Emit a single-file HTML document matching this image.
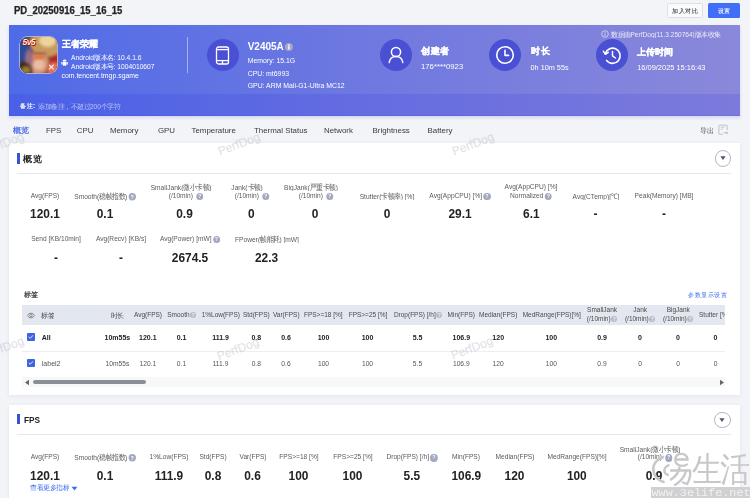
<!DOCTYPE html>
<html><head><meta charset="utf-8"><style>
html,body{margin:0;padding:0;}
body{width:750px;height:498px;position:relative;overflow:hidden;background:#f2f4f8;font-family:"Liberation Sans",sans-serif;}
.t{position:absolute;line-height:1;white-space:nowrap;}
.q2{display:inline-block;width:1.28em;height:1.28em;border-radius:50%;background:#b6bac8;color:#eef0f5;font-size:0.77em;line-height:1.32;text-align:center;font-weight:bold;vertical-align:0;margin-left:0.06em}
#w{position:absolute;left:0;top:0;width:750px;height:498px;will-change:transform;}
.q{display:inline-block;width:1.5em;height:1.32em;border-radius:50%;background:#a3a8c0;color:#fff;font-size:0.727em;line-height:1.357;text-align:center;font-weight:bold;vertical-align:0;margin-left:0.27em}
</style></head><body><div id="w">
<div class="t" style="top:5.63px;font-size:10.000px;font-weight:bold;color:#222;left:13.6px;transform:scale(0.9500,1.0000);transform-origin:0 0;-webkit-text-stroke:0.25px #222">PD_20250916_15_16_15</div>
<div style="position:absolute;left:667px;top:3px;width:36px;height:14.5px;background:#f9fafc;border:0.8px solid #dde0e8;box-sizing:border-box;border-radius:1.5px"></div>
<div class="t" style="top:7.58px;font-size:12.800px;color:#333;left:385.0px;width:600px;text-align:center;transform:scale(0.5000,0.5000);transform-origin:50% 0;-webkit-text-stroke:0.12px #333">加入对比</div>
<div style="position:absolute;left:707.5px;top:3px;width:32.5px;height:14.5px;background:#406ef9;border-radius:1.5px"></div>
<div class="t" style="top:7.58px;font-size:12.800px;color:#fff;left:423.70000000000005px;width:600px;text-align:center;transform:scale(0.5000,0.5000);transform-origin:50% 0;-webkit-text-stroke:0.12px #fff">设置</div>
<div style="position:absolute;left:9px;top:25px;width:731px;height:91px;background:linear-gradient(90deg,#4f6be8 0%,#6e78e0 48%,#8a88da 100%);box-shadow:0 2px 3px rgba(110,110,230,0.22)"></div>
<div style="position:absolute;left:9px;top:93.7px;width:731px;height:22.3px;background:rgba(30,25,230,0.12);border-bottom:0.8px solid rgba(50,50,200,0.12);box-sizing:border-box"></div>
<div style="position:absolute;left:20px;top:37px;width:36.5px;height:36px;border-radius:7.5px;overflow:hidden;box-shadow:0 0 0 0.7px rgba(255,235,190,0.75);background:#7a4a34"><div style="position:absolute;left:-5px;top:-2px;width:16px;height:28px;background:#2c4c9a;border-radius:50%;filter:blur(1.8px);"></div><div style="position:absolute;left:30px;top:10px;width:12px;height:22px;background:#b82420;border-radius:50%;filter:blur(1.4px);"></div><div style="position:absolute;left:10px;top:-8px;width:34px;height:28px;background:#c89a5c;border-radius:50%;filter:blur(1.8px);"></div><div style="position:absolute;left:19px;top:-3px;width:17px;height:13px;background:#eed49c;border-radius:50%;filter:blur(1.5px);"></div><div style="position:absolute;left:7px;top:14px;width:22px;height:24px;background:#d49478;border-radius:50%;filter:blur(1.4px);"></div><div style="position:absolute;left:13px;top:22px;width:12px;height:11px;background:#eabca4;border-radius:50%;filter:blur(1.4px);"></div><div style="position:absolute;left:5px;top:12px;width:8px;height:18px;background:#9a6a88;border-radius:50%;filter:blur(1.4px);"></div><div style="position:absolute;left:12px;top:15px;width:15px;height:3px;background:rgba(120,70,50,0.6);border-radius:50%;filter:blur(1.1px);"></div><div style="position:absolute;left:13px;top:18px;width:12px;height:3.5px;background:#e07838;border-radius:50%;filter:blur(0.8px);"></div><div style="position:absolute;left:-6px;top:25px;width:18px;height:18px;background:#3a2a18;border-radius:50%;filter:blur(1.8px);"></div><div style="position:absolute;left:1px;top:29px;width:10px;height:8px;background:#9a7a38;border-radius:50%;filter:blur(1.4px);"></div><div style="position:absolute;left:27px;top:25px;width:14px;height:15px;background:#ea7052;border-radius:50%;filter:blur(1.4px);"></div><div style="position:absolute;left:27.5px;top:26.5px;font:bold 8px/1 'Liberation Sans';color:#fff;opacity:0.9">✕</div><div style="position:absolute;left:2.5px;top:0.5px;font:italic bold 8.6px/1 'Liberation Sans';letter-spacing:-0.6px;color:#ffe8d0;text-shadow:0 0 0.6px #c81808,0 0 0.6px #c81808,0.6px 0.6px 0.8px #a01006">5v5</div></div>
<div class="t" style="top:39.30px;font-size:18.200px;font-weight:bold;color:#fff;left:61.6px;transform:scale(0.5000,0.5000);transform-origin:0 0;-webkit-text-stroke:0.5px #fff">王者荣耀</div>
<svg style="position:absolute;left:61px;top:58.6px" width="7.2" height="7.6" viewBox="0 0 7.2 7.6"><path d="M1.6 2.6 A2 2 0 0 1 5.6 2.6 Z" fill="#fff"/><rect x="1.6" y="2.9" width="4" height="3.4" rx="0.5" fill="#fff"/><rect x="0.3" y="3" width="1" height="2.6" rx="0.5" fill="#fff"/><rect x="5.9" y="3" width="1" height="2.6" rx="0.5" fill="#fff"/><rect x="2.4" y="5.6" width="0.9" height="1.7" rx="0.4" fill="#fff"/><rect x="3.9" y="5.6" width="0.9" height="1.7" rx="0.4" fill="#fff"/></svg>
<div class="t" style="top:54.43px;font-size:13.400px;color:#fff;left:70.9px;transform:scale(0.5000,0.5000);transform-origin:0 0;">Android版本名: 10.4.1.6</div>
<div class="t" style="top:62.63px;font-size:13.400px;color:#fff;left:70.9px;transform:scale(0.5000,0.5000);transform-origin:0 0;">Android版本号: 1004010607</div>
<div class="t" style="top:73.06px;font-size:6.900px;color:#fff;left:61.5px;">com.tencent.tmgp.sgame</div>
<div style="position:absolute;left:187px;top:37px;width:1px;height:36px;background:rgba(255,255,255,0.45)"></div>
<div style="position:absolute;left:206.5px;top:39px;width:32px;height:32px;background:#4a50d4;border-radius:50%"></div>
<svg style="position:absolute;left:215px;top:46px" width="15" height="19" viewBox="0 0 15 19"><rect x="1.5" y="1" width="12" height="17" rx="2" fill="none" stroke="#fff" stroke-width="1.3"/><line x1="1.5" y1="3.6" x2="13.5" y2="3.6" stroke="#fff" stroke-width="1.3"/><line x1="1.5" y1="14.6" x2="13.5" y2="14.6" stroke="#fff" stroke-width="1.3"/><line x1="7.5" y1="14.6" x2="7.5" y2="18" stroke="#fff" stroke-width="1.3"/></svg>
<div class="t" style="top:41.53px;font-size:10.000px;font-weight:bold;color:#fff;left:247.7px;">V2405A</div>
<svg style="position:absolute;left:285.2px;top:43px" width="7.8" height="7.8" viewBox="0 0 8 8"><circle cx="4" cy="4" r="4" fill="#a6aac6"/><circle cx="4" cy="2.2" r="0.8" fill="#fff"/><rect x="3.3" y="3.4" width="1.4" height="3.2" rx="0.3" fill="#fff"/></svg>
<div class="t" style="top:58.46px;font-size:6.900px;color:#fff;left:247.7px;">Memory: 15.1G</div>
<div class="t" style="top:70.66px;font-size:6.900px;color:#fff;left:247.7px;">CPU: mt6993</div>
<div class="t" style="top:82.76px;font-size:6.900px;color:#fff;left:247.7px;">GPU: ARM Mali-G1-Ultra MC12</div>
<div style="position:absolute;left:380px;top:39px;width:32px;height:32px;background:#4a50d4;border-radius:50%"></div>
<svg style="position:absolute;left:380px;top:39px" width="32" height="32" viewBox="0 0 32 32"><circle cx="16" cy="13" r="4.6" fill="none" stroke="#fff" stroke-width="1.5"/><path d="M9.2 23.5 C9.8 19.3 12.5 17.6 16 17.6 C19.5 17.6 22.2 19.3 22.8 23.5" fill="none" stroke="#fff" stroke-width="1.5" stroke-linecap="round"/></svg>
<div class="t" style="top:46.14px;font-size:18.800px;font-weight:bold;color:#fff;left:421px;transform:scale(0.5000,0.5000);transform-origin:0 0;-webkit-text-stroke:0.5px #fff">创建者</div>
<div class="t" style="top:63.34px;font-size:7.750px;color:#fff;left:421px;">176****0923</div>
<div style="position:absolute;left:489.2px;top:39px;width:32px;height:32px;background:#4a50d4;border-radius:50%"></div>
<svg style="position:absolute;left:489.2px;top:39px" width="32" height="32" viewBox="0 0 32 32"><circle cx="16" cy="16" r="8.3" fill="none" stroke="#fff" stroke-width="1.6"/><path d="M16 11.2 V16.4 H19.6" fill="none" stroke="#fff" stroke-width="1.6" stroke-linecap="round" stroke-linejoin="round"/></svg>
<div class="t" style="top:46.14px;font-size:18.800px;font-weight:bold;color:#fff;left:530.5px;transform:scale(0.5000,0.5000);transform-origin:0 0;-webkit-text-stroke:0.5px #fff">时长</div>
<div class="t" style="top:63.72px;font-size:7.300px;color:#fff;left:530.5px;">0h 10m 55s</div>
<div style="position:absolute;left:595.7px;top:39px;width:32px;height:32px;background:#4a50d4;border-radius:50%"></div>
<svg style="position:absolute;left:595.7px;top:39px" width="32" height="32" viewBox="0 0 32 32"><path d="M9.3 14.5 A7.6 7.6 0 1 1 10.6 21.5" fill="none" stroke="#fff" stroke-width="1.6" stroke-linecap="round"/><path d="M7.3 12.2 L9.4 15.3 L12.3 13.4" fill="none" stroke="#fff" stroke-width="1.5" stroke-linecap="round" stroke-linejoin="round"/><path d="M16.5 12.5 V16.8 L19.4 19" fill="none" stroke="#fff" stroke-width="1.5" stroke-linecap="round" stroke-linejoin="round"/></svg>
<div class="t" style="top:46.70px;font-size:18.200px;font-weight:bold;color:#fff;left:637.2px;transform:scale(0.5000,0.5000);transform-origin:0 0;-webkit-text-stroke:0.5px #fff">上传时间</div>
<div class="t" style="top:63.79px;font-size:7.450px;color:#fff;left:637.2px;">16/09/2025 15:16:43</div>
<svg style="position:absolute;left:601px;top:30px" width="8" height="8" viewBox="0 0 8 8"><circle cx="4" cy="4" r="3.3" fill="none" stroke="#e8e6f8" stroke-width="0.7"/><line x1="4" y1="3.4" x2="4" y2="6" stroke="#e8e6f8" stroke-width="0.8"/><circle cx="4" cy="2.2" r="0.45" fill="#e8e6f8"/></svg>
<div class="t" style="top:30.66px;font-size:13.100px;color:#eceaf8;left:611px;transform:scale(0.5000,0.5000);transform-origin:0 0;">数据由PerfDog(11.3.250764)版本收集</div>
<div class="t" style="top:103.18px;font-size:12.800px;font-weight:bold;color:#fff;left:19.6px;transform:scale(0.5000,0.5000);transform-origin:0 0;">备注:</div>
<div class="t" style="top:103.10px;font-size:13.000px;color:rgba(255,255,255,0.6);left:37.5px;transform:scale(0.5000,0.5000);transform-origin:0 0;">添加备注，不超过200个字符</div>
<div class="t" style="top:126.07px;font-size:15.200px;color:#3a5ce6;left:13.3px;transform:scale(0.5000,0.5000);transform-origin:0 0;-webkit-text-stroke:0.4px #3a5ce6">概览</div>
<div class="t" style="top:126.61px;font-size:7.900px;color:#3a3a3a;left:45.9px;">FPS</div>
<div class="t" style="top:126.61px;font-size:7.900px;color:#3a3a3a;left:76.8px;">CPU</div>
<div class="t" style="top:126.61px;font-size:7.900px;color:#3a3a3a;left:109.9px;">Memory</div>
<div class="t" style="top:126.61px;font-size:7.900px;color:#3a3a3a;left:157.9px;">GPU</div>
<div class="t" style="top:126.61px;font-size:7.900px;color:#3a3a3a;left:191.5px;">Temperature</div>
<div class="t" style="top:126.61px;font-size:7.900px;color:#3a3a3a;left:254px;">Thermal Status</div>
<div class="t" style="top:126.61px;font-size:7.900px;color:#3a3a3a;left:324px;">Network</div>
<div class="t" style="top:126.61px;font-size:7.900px;color:#3a3a3a;left:372.5px;">Brightness</div>
<div class="t" style="top:126.61px;font-size:7.900px;color:#3a3a3a;left:427.5px;">Battery</div>
<div class="t" style="top:127.33px;font-size:13.400px;color:#555;left:700.2px;transform:scale(0.5000,0.5000);transform-origin:0 0;">导出</div>
<svg style="position:absolute;left:718px;top:123.8px" width="11" height="11" viewBox="0 0 11 11"><path d="M9.3 6 V2.2 Q9.3 1.2 8.3 1.2 H1.9 Q0.9 1.2 0.9 2.2 V9.3 Q0.9 10.3 1.9 10.3 H4.8" fill="none" stroke="#b0b4c0" stroke-width="0.8"/><path d="M2.8 3.3 H6.6 M2.8 5.2 H5" stroke="#b8bcc8" stroke-width="0.7"/><path d="M5.8 8.8 H9.6 M8.4 7.6 L9.6 8.8 L8.4 10" fill="none" stroke="#a8acb8" stroke-width="0.8"/></svg>
<div style="position:absolute;left:9px;top:143px;width:731px;height:252.2px;background:#fff;box-shadow:0 1px 4px rgba(90,90,200,0.1)"></div>
<div style="position:absolute;left:17.4px;top:152.9px;width:2.2px;height:11px;background:#3853d0"></div>
<div class="t" style="top:153.84px;font-size:18.800px;font-weight:bold;color:#222;left:23.4px;transform:scale(0.5000,0.5000);transform-origin:0 0;">概览</div>
<div style="position:absolute;left:17px;top:172.5px;width:714px;height:0.6px;background:#e7e8ee"></div>
<div style="position:absolute;left:714.5px;top:150.2px;width:16.5px;height:16.5px;border:0.75px solid #b4b6c4;border-radius:50%;box-sizing:border-box"></div>
<svg style="position:absolute;left:718.75px;top:154.45px" width="8" height="8" viewBox="0 0 8 8"><path d="M1.4 2.3 H6.6 L4 6.1 Z" fill="#50526a"/></svg>
<div class="t" style="top:191.98px;font-size:7.700px;color:#5a5a5a;left:-105.0px;width:300px;text-align:center;transform:scale(0.8600,1.0000);transform-origin:50% 0;">Avg(FPS)</div>
<div class="t" style="top:209.43px;font-size:11.900px;font-weight:bold;color:#222;left:-105.0px;width:300px;text-align:center;">120.1</div>
<div class="t" style="top:191.98px;font-size:15.400px;color:#5a5a5a;left:-195.0px;width:600px;text-align:center;transform:scale(0.4300,0.5000);transform-origin:50% 0;">Smooth(稳帧指数)<span class="q">?</span></div>
<div class="t" style="top:209.43px;font-size:11.900px;font-weight:bold;color:#222;left:-45.0px;width:300px;text-align:center;">0.1</div>
<div class="t" style="top:183.38px;font-size:15.400px;color:#5a5a5a;left:-119.5px;width:600px;text-align:center;transform:scale(0.4300,0.5000);transform-origin:50% 0;">SmallJank(微小卡顿)</div>
<div class="t" style="top:191.98px;font-size:7.700px;color:#5a5a5a;left:35.5px;width:300px;text-align:center;transform:scale(0.8600,1.0000);transform-origin:50% 0;">(/10min) <span class="q">?</span></div>
<div class="t" style="top:209.43px;font-size:11.900px;font-weight:bold;color:#222;left:34.5px;width:300px;text-align:center;">0.9</div>
<div class="t" style="top:183.38px;font-size:15.400px;color:#5a5a5a;left:-52.599999999999994px;width:600px;text-align:center;transform:scale(0.4300,0.5000);transform-origin:50% 0;">Jank(卡顿)</div>
<div class="t" style="top:191.98px;font-size:7.700px;color:#5a5a5a;left:102.4px;width:300px;text-align:center;transform:scale(0.8600,1.0000);transform-origin:50% 0;">(/10min) <span class="q">?</span></div>
<div class="t" style="top:209.43px;font-size:11.900px;font-weight:bold;color:#222;left:101.4px;width:300px;text-align:center;">0</div>
<div class="t" style="top:183.38px;font-size:15.400px;color:#5a5a5a;left:11.0px;width:600px;text-align:center;transform:scale(0.4300,0.5000);transform-origin:50% 0;">BigJank(严重卡顿)</div>
<div class="t" style="top:191.98px;font-size:7.700px;color:#5a5a5a;left:166.0px;width:300px;text-align:center;transform:scale(0.8600,1.0000);transform-origin:50% 0;">(/10min) <span class="q">?</span></div>
<div class="t" style="top:209.43px;font-size:11.900px;font-weight:bold;color:#222;left:165.0px;width:300px;text-align:center;">0</div>
<div class="t" style="top:191.98px;font-size:15.400px;color:#5a5a5a;left:87.0px;width:600px;text-align:center;transform:scale(0.4300,0.5000);transform-origin:50% 0;">Stutter(卡顿率) [%]</div>
<div class="t" style="top:209.43px;font-size:11.900px;font-weight:bold;color:#222;left:237.0px;width:300px;text-align:center;">0</div>
<div class="t" style="top:191.98px;font-size:7.700px;color:#5a5a5a;left:310.0px;width:300px;text-align:center;transform:scale(0.8600,1.0000);transform-origin:50% 0;">Avg(AppCPU) [%]<span class="q">?</span></div>
<div class="t" style="top:209.43px;font-size:11.900px;font-weight:bold;color:#222;left:310.0px;width:300px;text-align:center;">29.1</div>
<div class="t" style="top:183.38px;font-size:7.700px;color:#5a5a5a;left:381.29999999999995px;width:300px;text-align:center;transform:scale(0.8600,1.0000);transform-origin:50% 0;">Avg(AppCPU) [%]</div>
<div class="t" style="top:191.98px;font-size:7.700px;color:#5a5a5a;left:381.29999999999995px;width:300px;text-align:center;transform:scale(0.8600,1.0000);transform-origin:50% 0;">Normalized<span class="q">?</span></div>
<div class="t" style="top:209.43px;font-size:11.900px;font-weight:bold;color:#222;left:381.29999999999995px;width:300px;text-align:center;">6.1</div>
<div class="t" style="top:191.98px;font-size:15.400px;color:#5a5a5a;left:295.5px;width:600px;text-align:center;transform:scale(0.4300,0.5000);transform-origin:50% 0;">Avg(CTemp)[℃]</div>
<div class="t" style="top:209.43px;font-size:11.900px;font-weight:bold;color:#222;left:445.5px;width:300px;text-align:center;">-</div>
<div class="t" style="top:191.98px;font-size:7.700px;color:#5a5a5a;left:514.0px;width:300px;text-align:center;transform:scale(0.8600,1.0000);transform-origin:50% 0;">Peak(Memory) [MB]</div>
<div class="t" style="top:209.43px;font-size:11.900px;font-weight:bold;color:#222;left:514.0px;width:300px;text-align:center;">-</div>
<div class="t" style="top:234.68px;font-size:7.700px;color:#5a5a5a;left:-94.0px;width:300px;text-align:center;transform:scale(0.8600,1.0000);transform-origin:50% 0;">Send [KB/10min]</div>
<div class="t" style="top:252.73px;font-size:11.900px;font-weight:bold;color:#222;left:-94.0px;width:300px;text-align:center;">-</div>
<div class="t" style="top:234.68px;font-size:7.700px;color:#5a5a5a;left:-29.0px;width:300px;text-align:center;transform:scale(0.8600,1.0000);transform-origin:50% 0;">Avg(Recv) [KB/s]</div>
<div class="t" style="top:252.73px;font-size:11.900px;font-weight:bold;color:#222;left:-29.0px;width:300px;text-align:center;">-</div>
<div class="t" style="top:234.68px;font-size:7.700px;color:#5a5a5a;left:40.0px;width:300px;text-align:center;transform:scale(0.8600,1.0000);transform-origin:50% 0;">Avg(Power) [mW]<span class="q">?</span></div>
<div class="t" style="top:252.73px;font-size:11.900px;font-weight:bold;color:#222;left:40.0px;width:300px;text-align:center;">2674.5</div>
<div class="t" style="top:234.68px;font-size:15.400px;color:#5a5a5a;left:-33.5px;width:600px;text-align:center;transform:scale(0.4300,0.5000);transform-origin:50% 0;">FPower(帧能耗) [mW]</div>
<div class="t" style="top:252.73px;font-size:11.900px;font-weight:bold;color:#222;left:116.5px;width:300px;text-align:center;">22.3</div>
<div class="t" style="top:291.27px;font-size:14.000px;color:#333;left:23.6px;transform:scale(0.5000,0.5000);transform-origin:0 0;-webkit-text-stroke:0.35px #333">标签</div>
<div class="t" style="top:292.08px;font-size:12.800px;color:#3b6cf0;left:126.5px;width:600px;text-align:right;transform:scale(0.5000,0.5000);transform-origin:100% 0;">参数显示设置</div>
<div style="position:absolute;left:22.3px;top:305.3px;width:703px;height:19.8px;background:#e3e7ef"></div>
<svg style="position:absolute;left:26.8px;top:312.2px" width="8" height="7" viewBox="0 0 8 7"><path d="M0.5 3.5 C1.7 0.4 6.3 0.4 7.5 3.5 C6.3 6.6 1.7 6.6 0.5 3.5 Z" fill="none" stroke="#707070" stroke-width="0.75"/><circle cx="4" cy="3.5" r="1.3" fill="none" stroke="#707070" stroke-width="0.75"/></svg>
<div class="t" style="top:312.00px;font-size:13.000px;color:#4a4a4a;left:41px;transform:scale(0.5000,0.5000);transform-origin:0 0;">标签</div>
<div class="t" style="top:312.00px;font-size:13.000px;color:#4a4a4a;left:-182.6px;width:600px;text-align:center;transform:scale(0.5000,0.5000);transform-origin:50% 0;">时长</div>
<div class="t" style="top:312.00px;font-size:6.500px;color:#4a4a4a;left:-2.0px;width:300px;text-align:center;">Avg(FPS)</div>
<div class="t" style="top:312.00px;font-size:6.500px;color:#4a4a4a;left:31.80000000000001px;width:300px;text-align:center;">Smooth<span class="q2">?</span></div>
<div class="t" style="top:312.00px;font-size:6.500px;color:#4a4a4a;left:70.80000000000001px;width:300px;text-align:center;">1%Low(FPS)</div>
<div class="t" style="top:312.00px;font-size:6.500px;color:#4a4a4a;left:106.30000000000001px;width:300px;text-align:center;">Std(FPS)</div>
<div class="t" style="top:312.00px;font-size:6.500px;color:#4a4a4a;left:136.3px;width:300px;text-align:center;">Var(FPS)</div>
<div class="t" style="top:312.00px;font-size:6.500px;color:#4a4a4a;left:173.3px;width:300px;text-align:center;">FPS>=18 [%]</div>
<div class="t" style="top:312.00px;font-size:6.500px;color:#4a4a4a;left:218.0px;width:300px;text-align:center;">FPS>=25 [%]</div>
<div class="t" style="top:312.00px;font-size:6.500px;color:#4a4a4a;left:268.2px;width:300px;text-align:center;">Drop(FPS) [/h]<span class="q2">?</span></div>
<div class="t" style="top:312.00px;font-size:6.500px;color:#4a4a4a;left:311.3px;width:300px;text-align:center;">Min(FPS)</div>
<div class="t" style="top:312.00px;font-size:6.500px;color:#4a4a4a;left:348.2px;width:300px;text-align:center;">Median(FPS)</div>
<div class="t" style="top:312.00px;font-size:6.500px;color:#4a4a4a;left:401.79999999999995px;width:300px;text-align:center;">MedRange(FPS)[%]</div>
<div class="t" style="top:307.30px;font-size:6.500px;color:#4a4a4a;left:452.1px;width:300px;text-align:center;">SmallJank</div>
<div class="t" style="top:315.50px;font-size:6.500px;color:#4a4a4a;left:452.1px;width:300px;text-align:center;">(/10min)<span class="q2">?</span></div>
<div class="t" style="top:307.30px;font-size:6.500px;color:#4a4a4a;left:490.20000000000005px;width:300px;text-align:center;">Jank</div>
<div class="t" style="top:315.50px;font-size:6.500px;color:#4a4a4a;left:490.20000000000005px;width:300px;text-align:center;">(/10min)<span class="q2">?</span></div>
<div class="t" style="top:307.30px;font-size:6.500px;color:#4a4a4a;left:528.2px;width:300px;text-align:center;">BigJank</div>
<div class="t" style="top:315.50px;font-size:6.500px;color:#4a4a4a;left:528.2px;width:300px;text-align:center;">(/10min)<span class="q2">?</span></div>
<div class="t" style="top:312.00px;font-size:6.500px;color:#4a4a4a;left:699px;width:26px;overflow:hidden;white-space:nowrap">Stutter [%]</div>
<div style="position:absolute;left:27.1px;top:333.2px;width:7.6px;height:7.6px;background:#3d63e0;border-radius:1px"></div>
<svg style="position:absolute;left:27.1px;top:333.2px" width="7.6" height="7.6" viewBox="0 0 8 8"><path d="M1.8 4.1 L3.4 5.6 L6.3 2.5" fill="none" stroke="#fff" stroke-width="0.9"/></svg>
<div class="t" style="top:334.07px;font-size:7.000px;font-weight:bold;color:#222;left:41.8px;">All</div>
<div class="t" style="top:334.07px;font-size:7.000px;font-weight:bold;color:#222;left:-32.599999999999994px;width:300px;text-align:center;">10m55s</div>
<div class="t" style="top:334.07px;font-size:7.000px;font-weight:bold;color:#222;left:-2.1999999999999886px;width:300px;text-align:center;">120.1</div>
<div class="t" style="top:334.07px;font-size:7.000px;font-weight:bold;color:#222;left:31.5px;width:300px;text-align:center;">0.1</div>
<div class="t" style="top:334.07px;font-size:7.000px;font-weight:bold;color:#222;left:70.5px;width:300px;text-align:center;">111.9</div>
<div class="t" style="top:334.07px;font-size:7.000px;font-weight:bold;color:#222;left:106.30000000000001px;width:300px;text-align:center;">0.8</div>
<div class="t" style="top:334.07px;font-size:7.000px;font-weight:bold;color:#222;left:136.0px;width:300px;text-align:center;">0.6</div>
<div class="t" style="top:334.07px;font-size:7.000px;font-weight:bold;color:#222;left:173.5px;width:300px;text-align:center;">100</div>
<div class="t" style="top:334.07px;font-size:7.000px;font-weight:bold;color:#222;left:217.5px;width:300px;text-align:center;">100</div>
<div class="t" style="top:334.07px;font-size:7.000px;font-weight:bold;color:#222;left:267.5px;width:300px;text-align:center;">5.5</div>
<div class="t" style="top:334.07px;font-size:7.000px;font-weight:bold;color:#222;left:311.3px;width:300px;text-align:center;">106.9</div>
<div class="t" style="top:334.07px;font-size:7.000px;font-weight:bold;color:#222;left:348.2px;width:300px;text-align:center;">120</div>
<div class="t" style="top:334.07px;font-size:7.000px;font-weight:bold;color:#222;left:401.29999999999995px;width:300px;text-align:center;">100</div>
<div class="t" style="top:334.07px;font-size:7.000px;font-weight:bold;color:#222;left:452.0px;width:300px;text-align:center;">0.9</div>
<div class="t" style="top:334.07px;font-size:7.000px;font-weight:bold;color:#222;left:490.0px;width:300px;text-align:center;">0</div>
<div class="t" style="top:334.07px;font-size:7.000px;font-weight:bold;color:#222;left:528.0px;width:300px;text-align:center;">0</div>
<div class="t" style="top:334.07px;font-size:7.000px;font-weight:bold;color:#222;left:565.5px;width:300px;text-align:center;">0</div>
<div style="position:absolute;left:22.3px;top:351px;width:703px;height:0.6px;background:#eceef3"></div>
<div style="position:absolute;left:27.1px;top:359.3px;width:7.6px;height:7.6px;background:#3d63e0;border-radius:1px"></div>
<svg style="position:absolute;left:27.1px;top:359.3px" width="7.6" height="7.6" viewBox="0 0 8 8"><path d="M1.8 4.1 L3.4 5.6 L6.3 2.5" fill="none" stroke="#fff" stroke-width="0.9"/></svg>
<div class="t" style="top:360.07px;font-size:7.000px;color:#555;left:41.8px;">label2</div>
<div class="t" style="top:360.93px;font-size:6.700px;color:#555;left:-32.599999999999994px;width:300px;text-align:center;">10m55s</div>
<div class="t" style="top:360.93px;font-size:6.700px;color:#555;left:-2.1999999999999886px;width:300px;text-align:center;">120.1</div>
<div class="t" style="top:360.93px;font-size:6.700px;color:#555;left:31.5px;width:300px;text-align:center;">0.1</div>
<div class="t" style="top:360.93px;font-size:6.700px;color:#555;left:70.5px;width:300px;text-align:center;">111.9</div>
<div class="t" style="top:360.93px;font-size:6.700px;color:#555;left:106.30000000000001px;width:300px;text-align:center;">0.8</div>
<div class="t" style="top:360.93px;font-size:6.700px;color:#555;left:136.0px;width:300px;text-align:center;">0.6</div>
<div class="t" style="top:360.93px;font-size:6.700px;color:#555;left:173.5px;width:300px;text-align:center;">100</div>
<div class="t" style="top:360.93px;font-size:6.700px;color:#555;left:217.5px;width:300px;text-align:center;">100</div>
<div class="t" style="top:360.93px;font-size:6.700px;color:#555;left:267.5px;width:300px;text-align:center;">5.5</div>
<div class="t" style="top:360.93px;font-size:6.700px;color:#555;left:311.3px;width:300px;text-align:center;">106.9</div>
<div class="t" style="top:360.93px;font-size:6.700px;color:#555;left:348.2px;width:300px;text-align:center;">120</div>
<div class="t" style="top:360.93px;font-size:6.700px;color:#555;left:401.29999999999995px;width:300px;text-align:center;">100</div>
<div class="t" style="top:360.93px;font-size:6.700px;color:#555;left:452.0px;width:300px;text-align:center;">0.9</div>
<div class="t" style="top:360.93px;font-size:6.700px;color:#555;left:490.0px;width:300px;text-align:center;">0</div>
<div class="t" style="top:360.93px;font-size:6.700px;color:#555;left:528.0px;width:300px;text-align:center;">0</div>
<div class="t" style="top:360.93px;font-size:6.700px;color:#555;left:565.5px;width:300px;text-align:center;">0</div>
<div style="position:absolute;left:22.3px;top:376.5px;width:703px;height:10px;background:#f7f8fa"></div>
<svg style="position:absolute;left:24px;top:378.5px" width="6" height="7" viewBox="0 0 6 7"><path d="M5 0.8 V6.2 L1 3.5 Z" fill="#666"/></svg>
<div style="position:absolute;left:33px;top:379.6px;width:113.4px;height:4.8px;background:#8d8f96;border-radius:2.4px"></div>
<svg style="position:absolute;left:719px;top:378.5px" width="6" height="7" viewBox="0 0 6 7"><path d="M1 0.8 V6.2 L5 3.5 Z" fill="#666"/></svg>
<div style="position:absolute;left:9px;top:404.6px;width:731px;height:100px;background:#fff;box-shadow:0 1px 4px rgba(90,90,200,0.1)"></div>
<div style="position:absolute;left:17.4px;top:413.9px;width:2.3px;height:10.6px;background:#3853d0"></div>
<div class="t" style="top:414.97px;font-size:9.600px;font-weight:bold;color:#222;left:23.8px;transform:scale(0.8600,1.0000);transform-origin:0 0;">FPS</div>
<div style="position:absolute;left:17px;top:433.7px;width:714px;height:0.6px;background:#e7e8ee"></div>
<div style="position:absolute;left:714px;top:411.5px;width:16.5px;height:16.5px;border:0.75px solid #b4b6c4;border-radius:50%;box-sizing:border-box"></div>
<svg style="position:absolute;left:718.25px;top:415.75px" width="8" height="8" viewBox="0 0 8 8"><path d="M1.4 2.3 H6.6 L4 6.1 Z" fill="#50526a"/></svg>
<div class="t" style="top:453.28px;font-size:7.700px;color:#5a5a5a;left:-105.0px;width:300px;text-align:center;transform:scale(0.8600,1.0000);transform-origin:50% 0;">Avg(FPS)</div>
<div class="t" style="top:470.63px;font-size:11.900px;font-weight:bold;color:#222;left:-105.0px;width:300px;text-align:center;">120.1</div>
<div class="t" style="top:453.28px;font-size:15.400px;color:#5a5a5a;left:-195.0px;width:600px;text-align:center;transform:scale(0.4300,0.5000);transform-origin:50% 0;">Smooth(稳帧指数)<span class="q">?</span></div>
<div class="t" style="top:470.63px;font-size:11.900px;font-weight:bold;color:#222;left:-45.0px;width:300px;text-align:center;">0.1</div>
<div class="t" style="top:453.28px;font-size:7.700px;color:#5a5a5a;left:19.0px;width:300px;text-align:center;transform:scale(0.8600,1.0000);transform-origin:50% 0;">1%Low(FPS)</div>
<div class="t" style="top:470.63px;font-size:11.900px;font-weight:bold;color:#222;left:19.0px;width:300px;text-align:center;">111.9</div>
<div class="t" style="top:453.28px;font-size:7.700px;color:#5a5a5a;left:63.0px;width:300px;text-align:center;transform:scale(0.8600,1.0000);transform-origin:50% 0;">Std(FPS)</div>
<div class="t" style="top:470.63px;font-size:11.900px;font-weight:bold;color:#222;left:63.0px;width:300px;text-align:center;">0.8</div>
<div class="t" style="top:453.28px;font-size:7.700px;color:#5a5a5a;left:102.5px;width:300px;text-align:center;transform:scale(0.8600,1.0000);transform-origin:50% 0;">Var(FPS)</div>
<div class="t" style="top:470.63px;font-size:11.900px;font-weight:bold;color:#222;left:102.5px;width:300px;text-align:center;">0.6</div>
<div class="t" style="top:453.28px;font-size:7.700px;color:#5a5a5a;left:148.5px;width:300px;text-align:center;transform:scale(0.8600,1.0000);transform-origin:50% 0;">FPS>=18 [%]</div>
<div class="t" style="top:470.63px;font-size:11.900px;font-weight:bold;color:#222;left:148.5px;width:300px;text-align:center;">100</div>
<div class="t" style="top:453.28px;font-size:7.700px;color:#5a5a5a;left:202.5px;width:300px;text-align:center;transform:scale(0.8600,1.0000);transform-origin:50% 0;">FPS>=25 [%]</div>
<div class="t" style="top:470.63px;font-size:11.900px;font-weight:bold;color:#222;left:202.5px;width:300px;text-align:center;">100</div>
<div class="t" style="top:453.28px;font-size:7.700px;color:#5a5a5a;left:261.8px;width:300px;text-align:center;transform:scale(0.8600,1.0000);transform-origin:50% 0;">Drop(FPS) [/h]<span class="q">?</span></div>
<div class="t" style="top:470.63px;font-size:11.900px;font-weight:bold;color:#222;left:261.8px;width:300px;text-align:center;">5.5</div>
<div class="t" style="top:453.28px;font-size:7.700px;color:#5a5a5a;left:316.3px;width:300px;text-align:center;transform:scale(0.8600,1.0000);transform-origin:50% 0;">Min(FPS)</div>
<div class="t" style="top:470.63px;font-size:11.900px;font-weight:bold;color:#222;left:316.3px;width:300px;text-align:center;">106.9</div>
<div class="t" style="top:453.28px;font-size:7.700px;color:#5a5a5a;left:364.5px;width:300px;text-align:center;transform:scale(0.8600,1.0000);transform-origin:50% 0;">Median(FPS)</div>
<div class="t" style="top:470.63px;font-size:11.900px;font-weight:bold;color:#222;left:364.5px;width:300px;text-align:center;">120</div>
<div class="t" style="top:453.28px;font-size:7.700px;color:#5a5a5a;left:426.79999999999995px;width:300px;text-align:center;transform:scale(0.8600,1.0000);transform-origin:50% 0;">MedRange(FPS)[%]</div>
<div class="t" style="top:470.63px;font-size:11.900px;font-weight:bold;color:#222;left:426.79999999999995px;width:300px;text-align:center;">100</div>
<div class="t" style="top:444.68px;font-size:15.400px;color:#5a5a5a;left:350.0px;width:600px;text-align:center;transform:scale(0.4300,0.5000);transform-origin:50% 0;">SmallJank(微小卡顿)</div>
<div class="t" style="top:453.28px;font-size:7.700px;color:#5a5a5a;left:505.0px;width:300px;text-align:center;transform:scale(0.8600,1.0000);transform-origin:50% 0;">(/10min) <span class="q">?</span></div>
<div class="t" style="top:470.63px;font-size:11.900px;font-weight:bold;color:#222;left:504.0px;width:300px;text-align:center;">0.9</div>
<div class="t" style="top:484.13px;font-size:13.400px;color:#3b6cf0;left:30px;transform:scale(0.5000,0.5000);transform-origin:0 0;">查看更多指标</div>
<svg style="position:absolute;left:70.5px;top:485.5px" width="7" height="5" viewBox="0 0 7 5"><path d="M0.6 0.8 H6.4 L3.5 4.4 Z" fill="#3b6cf0"/></svg>
<div style="position:absolute;left:198.5px;top:135px;width:80px;height:18px;text-align:center;font-size:12px;line-height:18px;color:rgba(150,150,168,0.24);-webkit-text-stroke:0.25px rgba(150,150,168,0.2);transform:rotate(-21deg)">PerfDog</div>
<div style="position:absolute;left:432.5px;top:134.8px;width:80px;height:18px;text-align:center;font-size:12px;line-height:18px;color:rgba(150,150,168,0.24);-webkit-text-stroke:0.25px rgba(150,150,168,0.2);transform:rotate(-21deg)">PerfDog</div>
<div style="position:absolute;left:-37px;top:134.5px;width:80px;height:18px;text-align:center;font-size:12px;line-height:18px;color:rgba(150,150,168,0.24);-webkit-text-stroke:0.25px rgba(150,150,168,0.2);transform:rotate(-21deg)">PerfDog</div>
<div style="position:absolute;left:197.5px;top:340px;width:80px;height:18px;text-align:center;font-size:12px;line-height:18px;color:rgba(150,150,168,0.24);-webkit-text-stroke:0.25px rgba(150,150,168,0.2);transform:rotate(-21deg)">PerfDog</div>
<div style="position:absolute;left:432px;top:339px;width:80px;height:18px;text-align:center;font-size:12px;line-height:18px;color:rgba(150,150,168,0.24);-webkit-text-stroke:0.25px rgba(150,150,168,0.2);transform:rotate(-21deg)">PerfDog</div>
<div style="position:absolute;left:-37px;top:339px;width:80px;height:18px;text-align:center;font-size:12px;line-height:18px;color:rgba(150,150,168,0.24);-webkit-text-stroke:0.25px rgba(150,150,168,0.2);transform:rotate(-21deg)">PerfDog</div>
<svg style="position:absolute;left:640px;top:448px" width="60" height="45" viewBox="640 448 60 45"><path d="M663 457.2 Q653.5 460.5 653.3 469 Q653.5 478.5 663.5 482" fill="none" stroke="#c8c8ca" stroke-width="2.6" stroke-linecap="round"/><path d="M668.5 465.3 Q664.3 467.5 664.3 470.8 Q664.5 474 668 474.8" fill="none" stroke="#c8c8ca" stroke-width="2.4" stroke-linecap="round"/><path d="M675.5 459.5 H687.5 Q687 453.8 681.3 453.8 Q675.3 453.8 675.3 459.8 Q675.5 465.5 682 465.8 Q685.5 465.8 687 464.5" fill="none" stroke="#c8c8ca" stroke-width="2.3" stroke-linecap="round"/><path d="M671 470.5 H690 Q691 478 687 484 L683 482.5" fill="none" stroke="#c8c8ca" stroke-width="2.4" stroke-linecap="round" stroke-linejoin="round"/><path d="M679.5 467.5 Q678.5 474.5 671 479.5 M686 471 Q683.5 480 675 485" fill="none" stroke="#c8c8ca" stroke-width="2.4" stroke-linecap="round"/></svg>
<div class="t" style="left:692px;top:453px;font-size:30px;line-height:1;color:#c8c8ca;letter-spacing:-2.5px;transform:scaleY(1.13);transform-origin:0 0">生活</div>
<div style="position:absolute;left:651px;top:486.7px;width:99px;height:11.3px;background:#d0d0d2"></div>
<div class="t" style="left:651.5px;top:488.3px;font-family:'Liberation Mono',monospace;font-size:11.8px;line-height:1;color:#f2f2f2">www.3elife.net</div>
</div></body></html>
